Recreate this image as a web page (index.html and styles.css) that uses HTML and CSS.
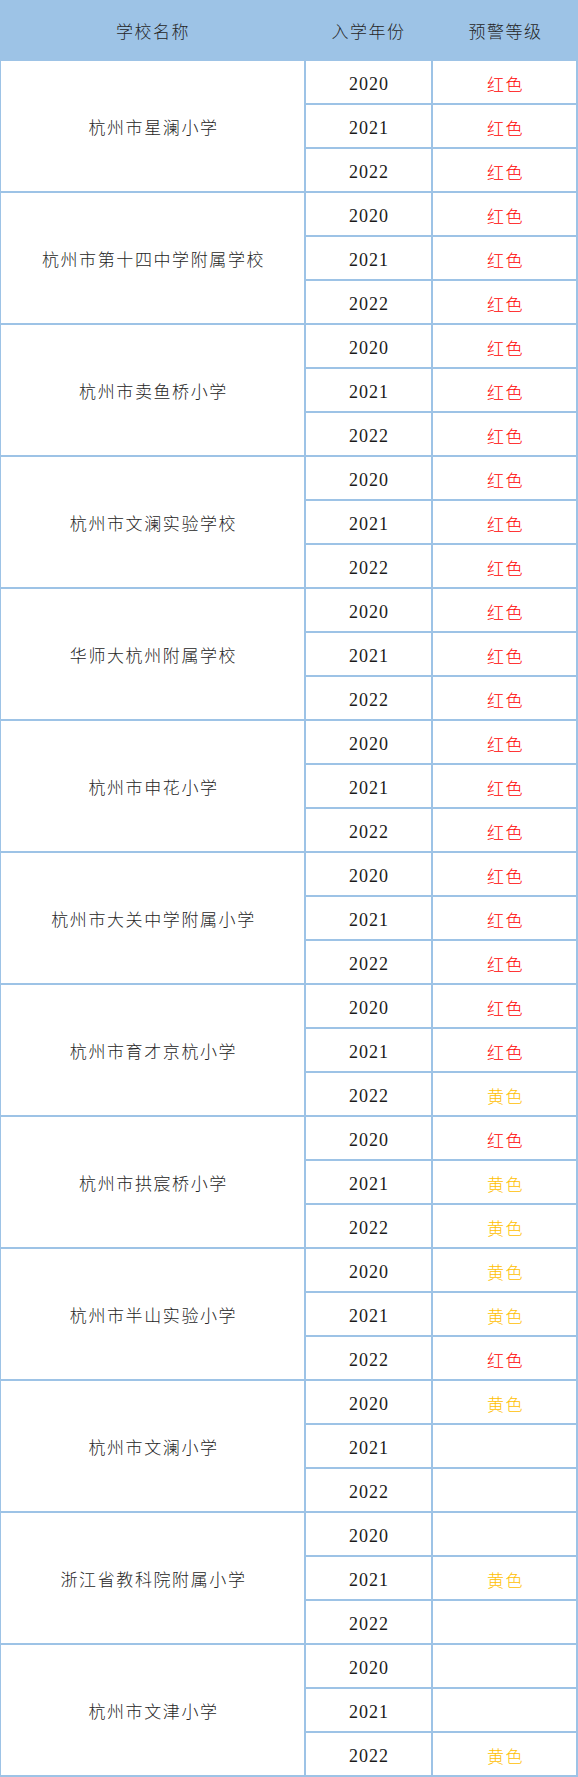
FILE: index.html
```html
<!DOCTYPE html>
<html lang="zh-CN">
<head>
<meta charset="utf-8">
<title>预警等级</title>
<link rel="stylesheet" href="styles.css">
</head>
<body>
<div class="sheet">
  <div class="head">
    <div class="hcell">学校名称</div>
    <div class="hcell">入学年份</div>
    <div class="hcell">预警等级</div>
  </div>
  <div class="grid">
    <div class="name">杭州市星澜小学</div>
    <div class="year">2020</div><div class="level red">红色</div>
    <div class="year">2021</div><div class="level red">红色</div>
    <div class="year">2022</div><div class="level red">红色</div>

    <div class="name">杭州市第十四中学附属学校</div>
    <div class="year">2020</div><div class="level red">红色</div>
    <div class="year">2021</div><div class="level red">红色</div>
    <div class="year">2022</div><div class="level red">红色</div>

    <div class="name">杭州市卖鱼桥小学</div>
    <div class="year">2020</div><div class="level red">红色</div>
    <div class="year">2021</div><div class="level red">红色</div>
    <div class="year">2022</div><div class="level red">红色</div>

    <div class="name">杭州市文澜实验学校</div>
    <div class="year">2020</div><div class="level red">红色</div>
    <div class="year">2021</div><div class="level red">红色</div>
    <div class="year">2022</div><div class="level red">红色</div>

    <div class="name">华师大杭州附属学校</div>
    <div class="year">2020</div><div class="level red">红色</div>
    <div class="year">2021</div><div class="level red">红色</div>
    <div class="year">2022</div><div class="level red">红色</div>

    <div class="name">杭州市申花小学</div>
    <div class="year">2020</div><div class="level red">红色</div>
    <div class="year">2021</div><div class="level red">红色</div>
    <div class="year">2022</div><div class="level red">红色</div>

    <div class="name">杭州市大关中学附属小学</div>
    <div class="year">2020</div><div class="level red">红色</div>
    <div class="year">2021</div><div class="level red">红色</div>
    <div class="year">2022</div><div class="level red">红色</div>

    <div class="name">杭州市育才京杭小学</div>
    <div class="year">2020</div><div class="level red">红色</div>
    <div class="year">2021</div><div class="level red">红色</div>
    <div class="year">2022</div><div class="level yellow">黄色</div>

    <div class="name">杭州市拱宸桥小学</div>
    <div class="year">2020</div><div class="level red">红色</div>
    <div class="year">2021</div><div class="level yellow">黄色</div>
    <div class="year">2022</div><div class="level yellow">黄色</div>

    <div class="name">杭州市半山实验小学</div>
    <div class="year">2020</div><div class="level yellow">黄色</div>
    <div class="year">2021</div><div class="level yellow">黄色</div>
    <div class="year">2022</div><div class="level red">红色</div>

    <div class="name">杭州市文澜小学</div>
    <div class="year">2020</div><div class="level yellow">黄色</div>
    <div class="year">2021</div><div class="level"></div>
    <div class="year">2022</div><div class="level"></div>

    <div class="name">浙江省教科院附属小学</div>
    <div class="year">2020</div><div class="level"></div>
    <div class="year">2021</div><div class="level yellow">黄色</div>
    <div class="year">2022</div><div class="level"></div>

    <div class="name">杭州市文津小学</div>
    <div class="year">2020</div><div class="level"></div>
    <div class="year">2021</div><div class="level"></div>
    <div class="year">2022</div><div class="level yellow">黄色</div>
  </div>
</div>
</body>
</html>
```
FILE: styles.css
```css
html, body {
  margin: 0;
  padding: 0;
  background: #ffffff;
}

.sheet {
  width: 578px;
  font-family: "Noto Sans CJK SC", "Noto Sans", sans-serif;
  font-size: 17px;
  font-weight: 300;
  color: #262626;
}

.head {
  display: grid;
  grid-template-columns: 304px 127px 147px;
  height: 61px;
  background: #9dc3e6;
}

.hcell {
  display: flex;
  align-items: center;
  justify-content: center;
  padding-left: 2px;
  letter-spacing: 1.5px;
}

.grid {
  display: grid;
  grid-template-columns: 303px 125px 143px;
  grid-auto-rows: 42px;
  gap: 2px;
  padding: 0 2px 2px 1px;
  background: #9dc3e6;
}

.name,
.year,
.level {
  background: #ffffff;
  display: flex;
  align-items: center;
  justify-content: center;
  box-sizing: border-box;
}

.name {
  grid-column: 1;
  grid-row: span 3;
  letter-spacing: 1.6px;
  padding-left: 2px;
}

.year {
  grid-column: 2;
  font-family: "Liberation Serif", serif;
  font-size: 18px;
  font-weight: 400;
  color: #1a1a1a;
  letter-spacing: 1px;
  padding-left: 1px;
  padding-top: 4px;
}

.level {
  grid-column: 3;
  letter-spacing: 1.5px;
  padding-left: 2px;
  padding-top: 2px;
}

.red {
  color: #ff0000;
}

.yellow {
  color: #ffc000;
}
```
